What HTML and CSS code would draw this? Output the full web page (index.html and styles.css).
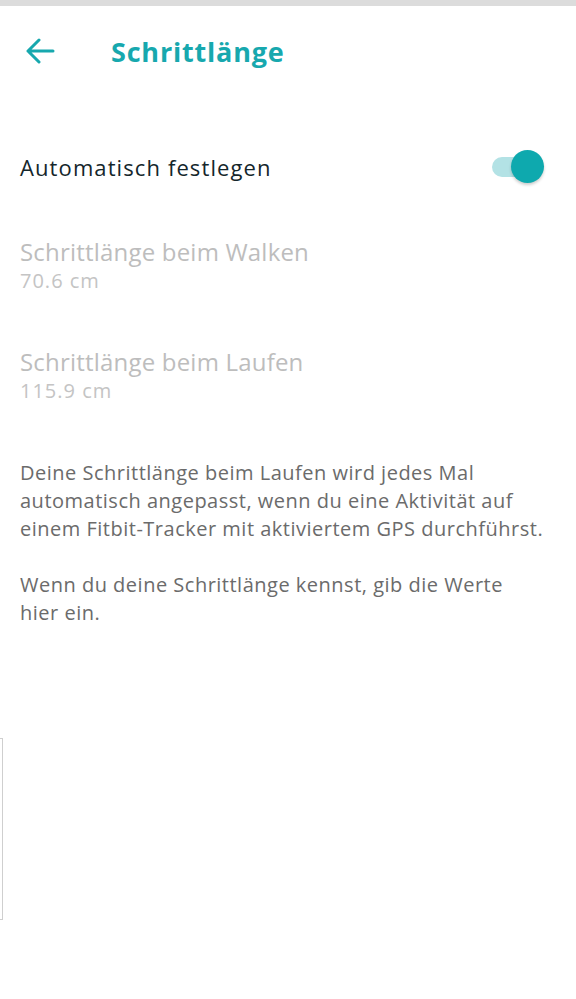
FILE: index.html
```html
<!DOCTYPE html>
<html lang="de">
<head>
<meta charset="utf-8">
<link rel="stylesheet" href="styles.css">
</head>
<body>
<div class="statusbar"></div>
<header class="header">
  <svg class="back" width="30" height="26" viewBox="0 0 30 26"><path d="M28 13H3M14 2L3 13l11 11" fill="none" stroke="#17a8ae" stroke-width="3" stroke-linecap="round" stroke-linejoin="round"/></svg>
  <h1 class="title">Schrittlänge</h1>
</header>
<main class="content">
  <div class="row-toggle">
    <span class="toggle-label">Automatisch festlegen</span>
    <span class="toggle"><span class="track"></span><span class="knob"></span></span>
  </div>
  <div class="setting">
    <div class="setting-title">Schrittlänge beim Walken</div>
    <div class="setting-value">70.6 cm</div>
  </div>
  <div class="setting">
    <div class="setting-title">Schrittlänge beim Laufen</div>
    <div class="setting-value">115.9 cm</div>
  </div>
  <p class="info">Deine Schrittlänge beim Laufen wird jedes Mal automatisch angepasst, wenn du eine Aktivität auf einem Fitbit-Tracker mit aktiviertem GPS durchführst.</p>
  <p class="info">Wenn du deine Schrittlänge kennst, gib die Werte hier ein.</p>
</main>
<div class="edge"></div>
</body>
</html>
```
FILE: styles.css
```css
html, body { margin: 0; padding: 0; background: #fff; }
body { width: 576px; height: 999px; overflow: hidden; font-family: "Open Sans", Lato, sans-serif; position: relative; }
.statusbar { height: 6px; background: #dcdcdc; }
.header { display: flex; align-items: center; height: 90px; padding-left: 25px; }
.back { display: block; }
.title { margin: 0 0 0 56px; font-size: 27px; font-weight: 700; letter-spacing: 0.8px; color: #17a8ae; }
.content { padding: 0 20px; }
.row-toggle { display: flex; align-items: center; justify-content: space-between; margin-top: 42px; height: 58px; }
.toggle-label { font-size: 22px; letter-spacing: 1.1px; color: #14262b; }
.toggle { position: relative; width: 54px; height: 36px; margin-right: 11px; }
.track { position: absolute; left: 1px; top: 8px; width: 40px; height: 20px; border-radius: 10px; background: #b3e2e5; }
.knob { position: absolute; right: 1px; top: 1px; width: 33px; height: 33px; border-radius: 50%; background: #0ea9ae; box-shadow: 0 2px 3px rgba(0,0,0,0.2); }
.setting { margin-top: 40px; height: 93px; }
.setting + .setting { margin-top: 17px; }
.setting-title { font-size: 24px; letter-spacing: 0.2px; color: #bdbdbd; line-height: 32px; }
.setting-value { font-size: 20px; letter-spacing: 1px; color: #c4c4c4; line-height: 26px; }
.info { margin: 0 10px 28px 0; font-size: 20px; letter-spacing: 0.5px; line-height: 28px; color: #6b6b6b; }
.setting + .info { margin-top: 20px; }
.edge { position: absolute; left: 0; top: 738px; width: 2px; height: 180px; border: 1px solid #cfcfcf; border-left: none; }
```
